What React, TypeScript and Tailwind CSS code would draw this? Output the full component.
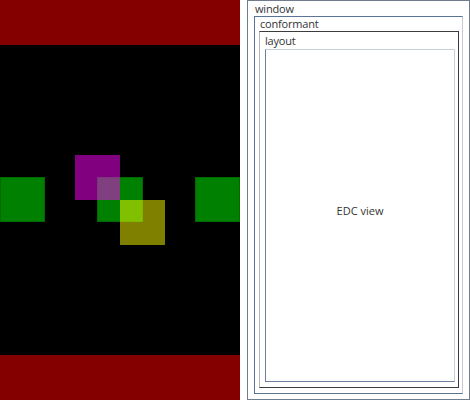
import React from 'react';

function Canvas() {
  return (
    <div className="flex flex-col w-[240px] h-[400px] shrink-0">
      <div className="h-[45px] bg-[#840000]" />
      <div className="relative flex-1 bg-black overflow-hidden">
        {/* green blocks */}
        <div className="absolute left-0 top-[132px] w-[45px] h-[45px] bg-[#008000] border border-[#006a00]" />
        <div className="absolute left-[97px] top-[132px] w-[46px] h-[45px] bg-[#008000] border border-[#006a00]" />
        <div className="absolute left-[195px] top-[132px] w-[45px] h-[45px] bg-[#008000] border border-[#006a00]" />
        {/* translucent blocks */}
        <div className="absolute left-[75px] top-[110px] w-[45px] h-[45px] bg-[#ff00ff]/50" />
        <div className="absolute left-[120px] top-[155px] w-[45px] h-[45px] bg-[#ffff00]/50" />
      </div>
      <div className="h-[45px] bg-[#840000]" />
    </div>
  );
}

function Inspector() {
  const font = { fontFamily: '"Open Sans", "Noto Sans", sans-serif' };
  return (
    <div className="pl-[7px] h-[400px]" style={font}>
      <div className="w-[223px] h-[400px] border border-[#6f7d8f] flex flex-col px-[6px] pb-[5px] text-[11px] text-[#333]">
        <div className="h-[15px] leading-[15px] pl-[1px] tracking-[-0.2px]">window</div>
        <div className="flex-1 flex flex-col border border-[#5b7396] border-r-[#c3cbd6] pl-[4px] pr-[3px] pb-[5px]">
          <div className="h-[14px] leading-[14px] pl-[1px] tracking-[-0.2px]">conformant</div>
          <div className="flex-1 flex flex-col border border-[#3c3c3c] border-l-[#b8b8b8] pl-[5px] pr-[3px] pb-[5px]">
            <div className="h-[17px] leading-[17px] tracking-[-0.2px]">layout</div>
            <div className="flex-1 flex items-center justify-center pb-[9px] border border-[#c5d0dc] border-l-[#6a82a2] border-b-[#6a82a2] bg-white">
              EDC view
            </div>
          </div>
        </div>
      </div>
    </div>
  );
}

export default function App() {
  return (
    <div className="flex w-[470px] h-[400px] bg-white overflow-hidden">
      <Canvas />
      <Inspector />
    </div>
  );
}
